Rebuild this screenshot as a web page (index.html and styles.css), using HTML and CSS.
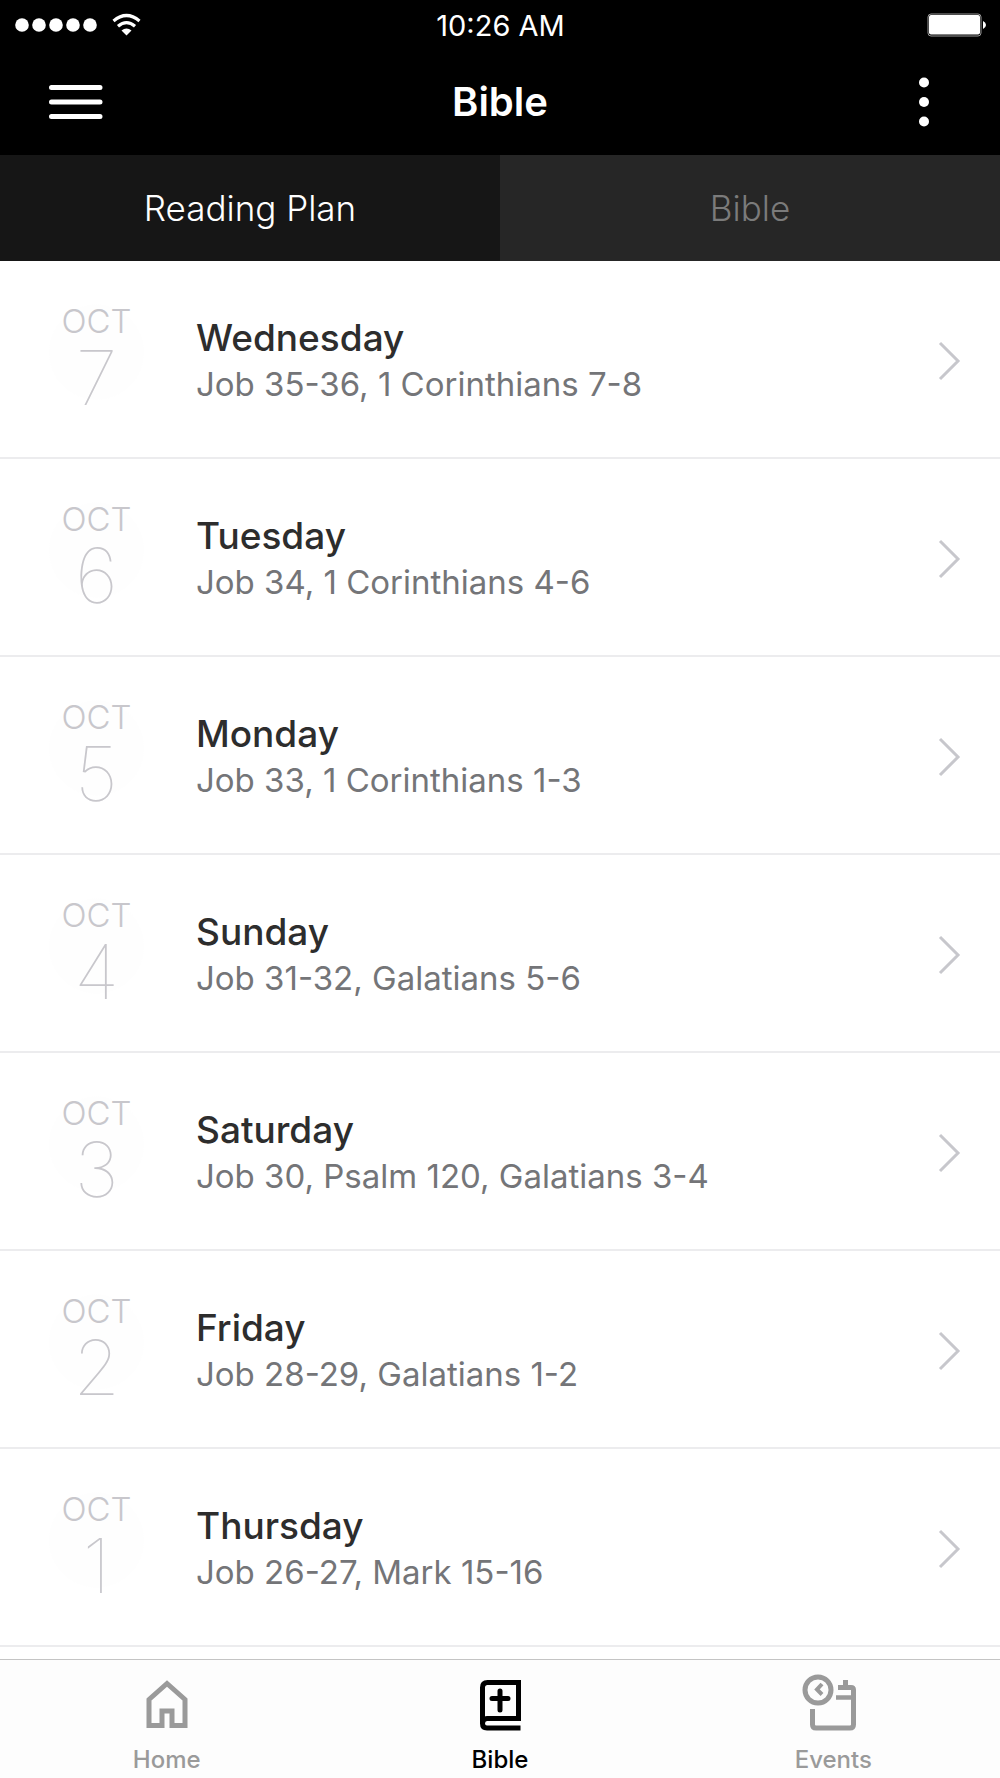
FILE: index.html
```html
<!DOCTYPE html>
<html lang="en">
<head>
    <meta charset="UTF-8">
    <meta name="viewport" content="width=device-width, initial-scale=1.0">
    <title>Bible</title>
    <link rel="stylesheet" href="styles.css">
</head>
<body>
    <header class="header">
        <div class="status-bar">
            <div class="status-left">
                <svg class="signal" viewBox="0 0 82 14" fill="#fff" aria-hidden="true">
                    <circle cx="7" cy="7" r="6.8"/>
                    <circle cx="24" cy="7" r="6.8"/>
                    <circle cx="41" cy="7" r="6.8"/>
                    <circle cx="58" cy="7" r="6.8"/>
                    <circle cx="75" cy="7" r="6.8"/>
                </svg>
                <svg class="wifi" viewBox="0 0 30 22" fill="none" stroke="#fff" stroke-width="3.2" aria-hidden="true">
                    <path d="M1.500 7Q14.500 -4 27.500 7"/>
                    <path d="M6 12.200Q14.500 5 23 12.200"/>
                    <path d="M9.500 16.500Q14.500 12.600 19.500 16.500L14.500 21.500Z" fill="#fff" stroke="none"/>
                </svg>
            </div>
            <span class="time">10:26 AM</span>
            <div class="status-right">
                <svg class="battery" viewBox="0 0 59 24" aria-hidden="true">
                    <rect x="1" y="1" width="53" height="22" rx="3" fill="#000" stroke="#999" stroke-width="1"/>
                    <rect x="2" y="2" width="51" height="19.500" rx="2" fill="#fff"/>
                    <path d="M56 8Q59 9.500 59 12T56 16Z" fill="#fff"/>
                </svg>
            </div>
        </div>
        <div class="nav-bar">
            <button class="icon-button" type="button" aria-label="Menu">
                <svg class="menu-icon" viewBox="0 0 54 36" stroke="#fff" stroke-width="5" stroke-linecap="round">
                    <path d="M2.500 3.500H51M2.500 18H51M2.500 32.500H51"/>
                </svg>
            </button>
            <h1 class="title">Bible</h1>
            <button class="icon-button more" type="button" aria-label="More">
                <svg class="more-icon" viewBox="0 0 10 50" fill="#fff">
                    <circle cx="5" cy="5.500" r="5"/>
                    <circle cx="5" cy="25" r="5"/>
                    <circle cx="5" cy="44.500" r="5"/>
                </svg>
            </button>
        </div>
        <div class="tabs">
            <button class="tab active" type="button">Reading Plan</button>
            <button class="tab" type="button">Bible</button>
        </div>
    </header>

    <main class="plan">
        <a class="row" href="#">
            <div class="date"><span class="month">OCT</span><span class="day">7</span></div>
            <div class="info"><h2 class="weekday">Wednesday</h2><p class="passage">Job 35-36, 1 Corinthians 7-8</p></div>
            <svg class="chevron" viewBox="0 0 22 40"><path d="M2 2L20 20L2 38"/></svg>
        </a>
        <a class="row" href="#">
            <div class="date"><span class="month">OCT</span><span class="day">6</span></div>
            <div class="info"><h2 class="weekday">Tuesday</h2><p class="passage">Job 34, 1 Corinthians 4-6</p></div>
            <svg class="chevron" viewBox="0 0 22 40"><path d="M2 2L20 20L2 38"/></svg>
        </a>
        <a class="row" href="#">
            <div class="date"><span class="month">OCT</span><span class="day">5</span></div>
            <div class="info"><h2 class="weekday">Monday</h2><p class="passage">Job 33, 1 Corinthians 1-3</p></div>
            <svg class="chevron" viewBox="0 0 22 40"><path d="M2 2L20 20L2 38"/></svg>
        </a>
        <a class="row" href="#">
            <div class="date"><span class="month">OCT</span><span class="day">4</span></div>
            <div class="info"><h2 class="weekday">Sunday</h2><p class="passage">Job 31-32, Galatians 5-6</p></div>
            <svg class="chevron" viewBox="0 0 22 40"><path d="M2 2L20 20L2 38"/></svg>
        </a>
        <a class="row" href="#">
            <div class="date"><span class="month">OCT</span><span class="day">3</span></div>
            <div class="info"><h2 class="weekday">Saturday</h2><p class="passage">Job 30, Psalm 120, Galatians 3-4</p></div>
            <svg class="chevron" viewBox="0 0 22 40"><path d="M2 2L20 20L2 38"/></svg>
        </a>
        <a class="row" href="#">
            <div class="date"><span class="month">OCT</span><span class="day">2</span></div>
            <div class="info"><h2 class="weekday">Friday</h2><p class="passage">Job 28-29, Galatians 1-2</p></div>
            <svg class="chevron" viewBox="0 0 22 40"><path d="M2 2L20 20L2 38"/></svg>
        </a>
        <a class="row" href="#">
            <div class="date"><span class="month">OCT</span><span class="day">1</span></div>
            <div class="info"><h2 class="weekday">Thursday</h2><p class="passage">Job 26-27, Mark 15-16</p></div>
            <svg class="chevron" viewBox="0 0 22 40"><path d="M2 2L20 20L2 38"/></svg>
        </a>
    </main>

    <nav class="tab-bar">
        <a class="tab-item" href="#">
            <svg class="tab-icon" viewBox="0 0 56 56" fill="none" stroke="currentColor" stroke-width="5">
                <path d="M10 50.500V24.500L28 8.500L46 24.500V50.500H33V36H23V50.500Z"/>
            </svg>
            <span>Home</span>
        </a>
        <a class="tab-item active" href="#">
            <svg class="tab-icon" viewBox="0 0 56 56" fill="none" stroke="currentColor" stroke-width="5">
                <path d="M48.500 53H15Q10.500 53 10.500 48.500V12.500Q10.500 7.500 15.500 7.500H46.500V43.500H15Q10.500 43.500 10.500 48.500"/>
                <path d="M46.500 43.500H48.500"/>
                <path d="M28 16V35M20 23.500H36" stroke-linecap="round"/>
            </svg>
            <span>Bible</span>
        </a>
        <a class="tab-item" href="#">
            <svg class="tab-icon" viewBox="0 0 56 56" fill="none" stroke="currentColor" stroke-width="5">
                <circle cx="13" cy="15" r="13"/>
                <path d="M17 9L12 14.500L17 19.500" stroke-width="4"/>
                <path d="M7.500 34V49.500Q7.500 53 11 53H45Q48.500 53 48.500 49.500V15Q48.500 12.500 46 12.500H33"/>
                <path d="M31 22.500H48" stroke-width="4.500"/>
                <path d="M40.500 5V13"/>
            </svg>
            <span>Events</span>
        </a>
    </nav>
</body>
</html>
```

FILE: styles.css
```css
* {
    box-sizing: border-box;
}
body {
    margin: 0;
    min-height: 100vh;
    display: flex;
    flex-direction: column;
    font-family: Inter, "Liberation Sans", sans-serif;
    background-color: #ffffff;
}
a {
    color: inherit;
    text-decoration: none;
}
button {
    border: none;
    padding: 0;
    background: none;
    font-family: inherit;
    cursor: pointer;
}
svg {
    display: block;
    overflow: visible;
}
.header {
    background-color: #000000;
    color: #ffffff;
}
.status-bar {
    height: 50px;
    padding: 0 14px 0 15px;
    display: grid;
    grid-template-columns: 1fr auto 1fr;
    align-items: center;
}
.status-left {
    display: flex;
    align-items: center;
    gap: 15px;
}
.status-right {
    display: flex;
    justify-content: flex-end;
}
.signal {
    width: 82px;
    height: 14px;
}
.wifi {
    width: 30px;
    height: 22px;
}
.time {
    font-size: 29px;
}
.battery {
    width: 59px;
    height: 24px;
}
.nav-bar {
    height: 105px;
    padding: 0 49px 2px;
    display: grid;
    grid-template-columns: 1fr auto 1fr;
    align-items: center;
}
.icon-button {
    justify-self: start;
}
.icon-button.more {
    justify-self: end;
    padding-right: 22px;
}
.menu-icon {
    width: 54px;
    height: 36px;
}
.more-icon {
    width: 10px;
    height: 50px;
}
.title {
    margin: 0;
    font-size: 40px;
    font-weight: 600;
}
.tabs {
    display: flex;
}
.tab {
    flex: 1;
    height: 106px;
    background-color: #262626;
    color: #7b7b7b;
    font-size: 35px;
    font-weight: 300;
}
.tab.active {
    background-color: #161616;
    color: #ffffff;
}
.plan {
    flex: 1;
}
.row {
    height: 198px;
    padding: 4px 40px 0 48px;
    display: flex;
    align-items: center;
    border-bottom: 2px solid #ececee;
}
.date {
    width: 97px;
    padding-bottom: 5px;
    display: flex;
    flex-direction: column;
    align-items: center;
    color: #c8c7cc;
    background: radial-gradient(circle 48px at 50% 42%, #fefefe 98%, transparent);
}
.month {
    font-size: 33px;
    font-weight: 300;
    line-height: 36px;
}
.day {
    font-size: 76px;
    font-weight: 100;
    line-height: 76px;
}
.info {
    flex: 1;
    padding-left: 51px;
}
.weekday {
    margin: 0;
    font-size: 37px;
    font-weight: 500;
    line-height: 46px;
    color: #2d2d2d;
}
.passage {
    margin: 0;
    font-size: 33px;
    line-height: 46px;
    color: #747578;
}
.chevron {
    width: 22px;
    height: 40px;
    fill: none;
    stroke: #c7c7cc;
    stroke-width: 3;
}
.tab-bar {
    height: 119px;
    padding-top: 15px;
    display: flex;
    border-top: 1px solid #c4c4c4;
    background-color: #fdfdfd;
}
.tab-item {
    flex: 1;
    display: flex;
    flex-direction: column;
    align-items: center;
    gap: 13px;
    color: #9a9a9a;
    font-size: 24px;
    font-weight: 500;
    line-height: 32px;
}
.tab-item.active {
    color: #000000;
}
.tab-icon {
    width: 56px;
    height: 56px;
}
```
